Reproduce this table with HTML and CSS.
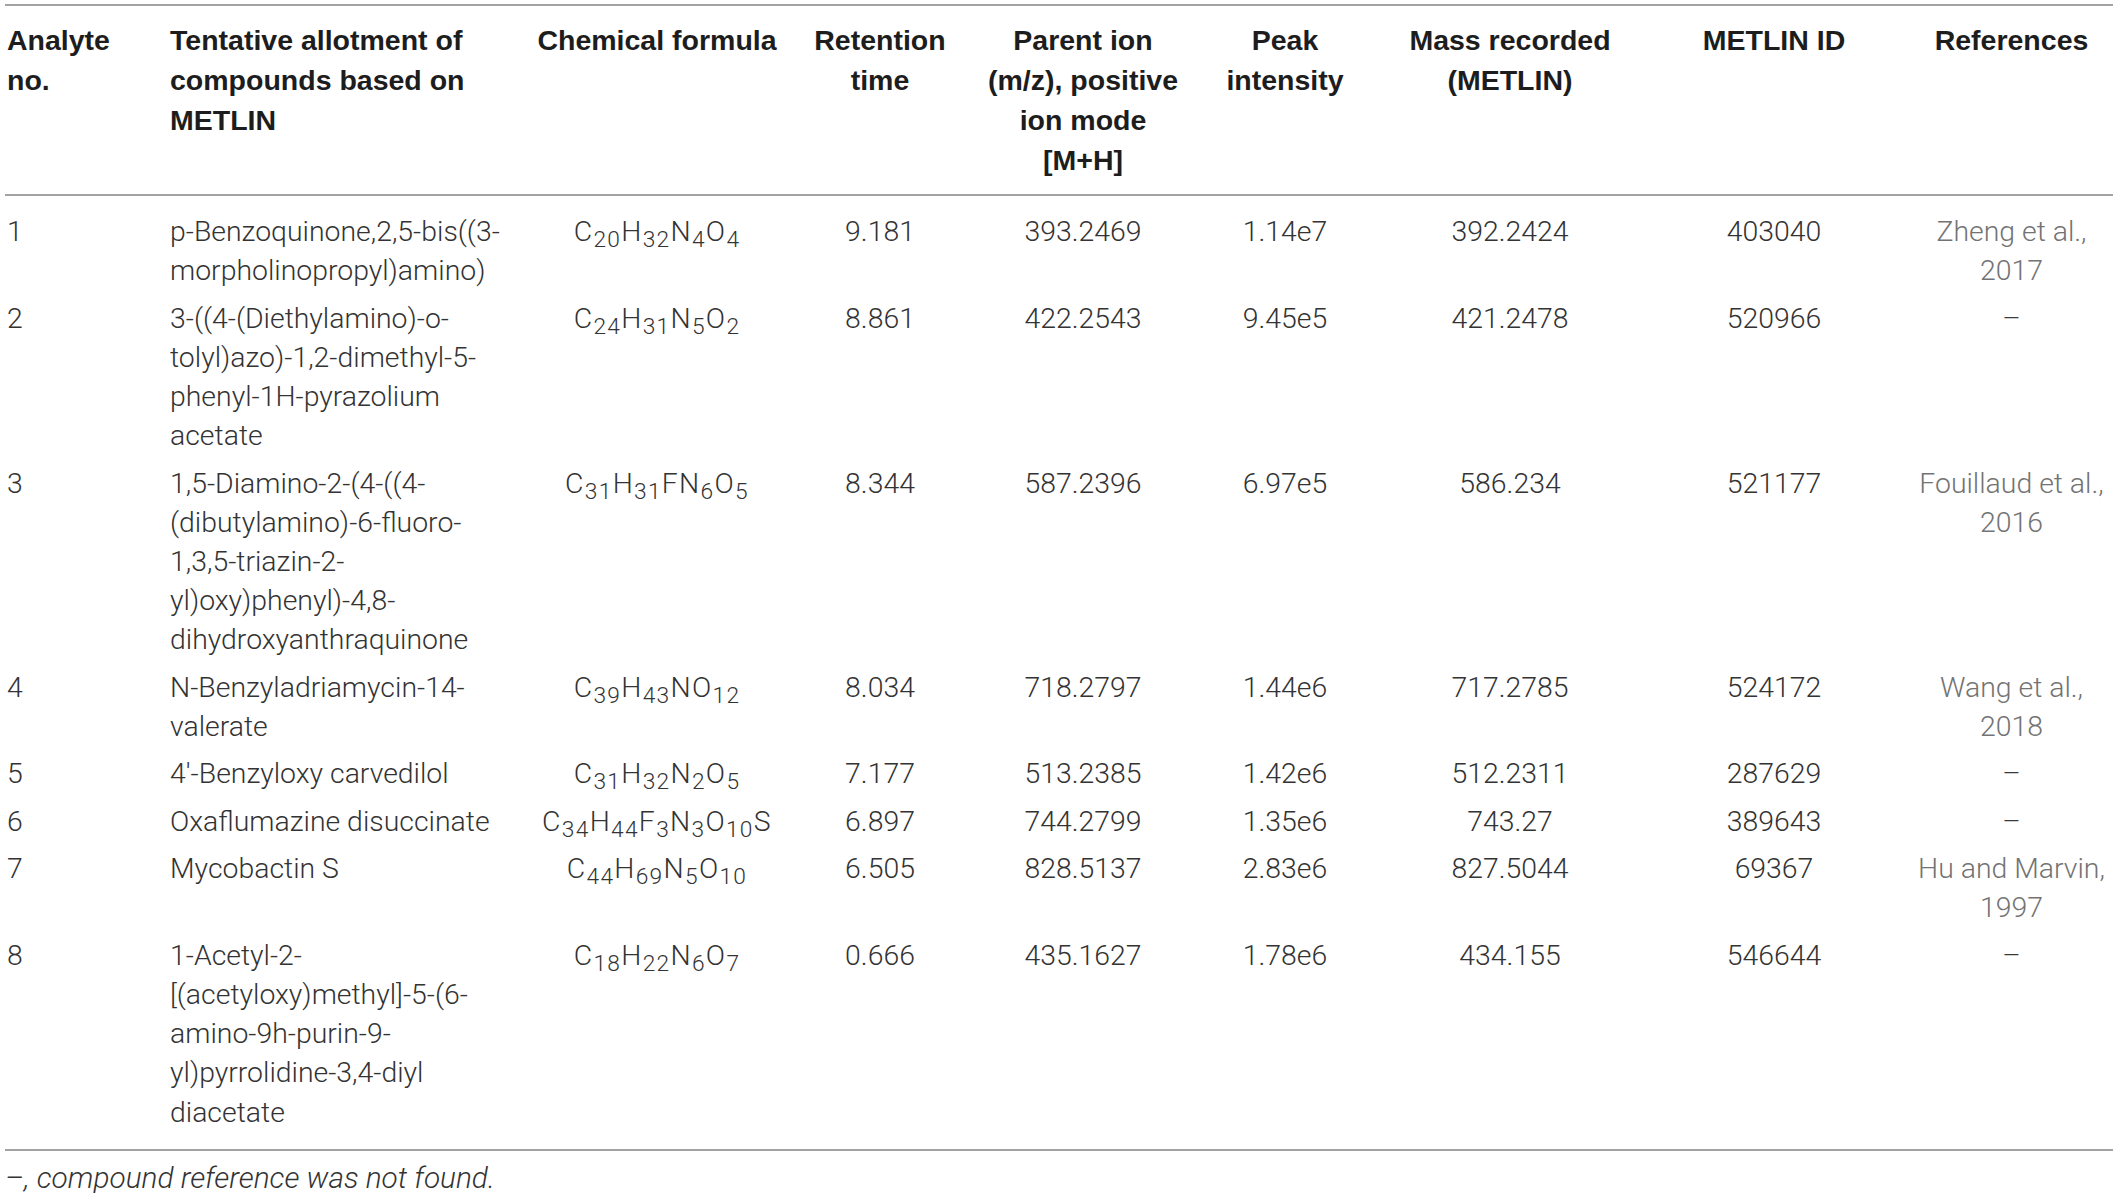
FILE: index.html
```html
<!DOCTYPE html>
<html lang="en">
<head>
<meta charset="utf-8">
<title>Tentative compounds based on METLIN</title>
<link rel="stylesheet" href="styles.css">
</head>
<body>
<div class="sheet">
<table class="data">
  <colgroup>
    <col class="c-no">
    <col class="c-name">
    <col class="c-formula">
    <col class="c-rt">
    <col class="c-ion">
    <col class="c-peak">
    <col class="c-mass">
    <col class="c-id">
    <col class="c-ref">
  </colgroup>
  <thead>
    <tr>
      <th class="left">Analyte<br>no.</th>
      <th class="left">Tentative allotment of<br>compounds based on<br>METLIN</th>
      <th>Chemical formula</th>
      <th>Retention<br>time</th>
      <th>Parent ion<br>(m/z), positive<br>ion mode<br>[M+H]</th>
      <th>Peak<br>intensity</th>
      <th>Mass recorded<br>(METLIN)</th>
      <th>METLIN ID</th>
      <th>References</th>
    </tr>
  </thead>
  <tbody>
    <tr>
      <td class="left">1</td>
      <td class="left">p-Benzoquinone,2,5-bis((3-<br>morpholinopropyl)amino)</td>
      <td class="formula">C<sub>20</sub>H<sub>32</sub>N<sub>4</sub>O<sub>4</sub></td>
      <td>9.181</td>
      <td>393.2469</td>
      <td>1.14e7</td>
      <td>392.2424</td>
      <td>403040</td>
      <td class="ref">Zheng et al.,<br>2017</td>
    </tr>
    <tr>
      <td class="left">2</td>
      <td class="left">3-((4-(Diethylamino)-o-<br>tolyl)azo)-1,2-dimethyl-5-<br>phenyl-1H-pyrazolium<br>acetate</td>
      <td class="formula">C<sub>24</sub>H<sub>31</sub>N<sub>5</sub>O<sub>2</sub></td>
      <td>8.861</td>
      <td>422.2543</td>
      <td>9.45e5</td>
      <td>421.2478</td>
      <td>520966</td>
      <td class="ref none">–</td>
    </tr>
    <tr>
      <td class="left">3</td>
      <td class="left">1,5-Diamino-2-(4-((4-<br>(dibutylamino)-6-fluoro-<br>1,3,5-triazin-2-<br>yl)oxy)phenyl)-4,8-<br>dihydroxyanthraquinone</td>
      <td class="formula">C<sub>31</sub>H<sub>31</sub>FN<sub>6</sub>O<sub>5</sub></td>
      <td>8.344</td>
      <td>587.2396</td>
      <td>6.97e5</td>
      <td>586.234</td>
      <td>521177</td>
      <td class="ref">Fouillaud et al.,<br>2016</td>
    </tr>
    <tr>
      <td class="left">4</td>
      <td class="left">N-Benzyladriamycin-14-<br>valerate</td>
      <td class="formula">C<sub>39</sub>H<sub>43</sub>NO<sub>12</sub></td>
      <td>8.034</td>
      <td>718.2797</td>
      <td>1.44e6</td>
      <td>717.2785</td>
      <td>524172</td>
      <td class="ref">Wang et al.,<br>2018</td>
    </tr>
    <tr>
      <td class="left">5</td>
      <td class="left">4′-Benzyloxy carvedilol</td>
      <td class="formula">C<sub>31</sub>H<sub>32</sub>N<sub>2</sub>O<sub>5</sub></td>
      <td>7.177</td>
      <td>513.2385</td>
      <td>1.42e6</td>
      <td>512.2311</td>
      <td>287629</td>
      <td class="ref none">–</td>
    </tr>
    <tr>
      <td class="left">6</td>
      <td class="left">Oxaflumazine disuccinate</td>
      <td class="formula">C<sub>34</sub>H<sub>44</sub>F<sub>3</sub>N<sub>3</sub>O<sub>10</sub>S</td>
      <td>6.897</td>
      <td>744.2799</td>
      <td>1.35e6</td>
      <td>743.27</td>
      <td>389643</td>
      <td class="ref none">–</td>
    </tr>
    <tr>
      <td class="left">7</td>
      <td class="left">Mycobactin S</td>
      <td class="formula">C<sub>44</sub>H<sub>69</sub>N<sub>5</sub>O<sub>10</sub></td>
      <td>6.505</td>
      <td>828.5137</td>
      <td>2.83e6</td>
      <td>827.5044</td>
      <td>69367</td>
      <td class="ref">Hu and Marvin,<br>1997</td>
    </tr>
    <tr>
      <td class="left">8</td>
      <td class="left">1-Acetyl-2-<br>[(acetyloxy)methyl]-5-(6-<br>amino-9h-purin-9-<br>yl)pyrrolidine-3,4-diyl<br>diacetate</td>
      <td class="formula">C<sub>18</sub>H<sub>22</sub>N<sub>6</sub>O<sub>7</sub></td>
      <td>0.666</td>
      <td>435.1627</td>
      <td>1.78e6</td>
      <td>434.155</td>
      <td>546644</td>
      <td class="ref none">–</td>
    </tr>
  </tbody>
</table>
<p class="note">–, compound reference was not found.</p>
</div>
</body>
</html>
```

FILE: styles.css
```css
html, body {
  margin: 0;
  padding: 0;
  background: #ffffff;
}

.sheet {
  padding: 4px 0 0 5px;
}

.data {
  border-collapse: collapse;
  table-layout: fixed;
  width: 2108px;
}

.c-no { width: 163px; }
.c-name { width: 364px; }
.c-formula { width: 250px; }
.c-rt { width: 196px; }
.c-ion { width: 210px; }
.c-peak { width: 194px; }
.c-mass { width: 256px; }
.c-id { width: 272px; }
.c-ref { width: 203px; }

.data th {
  font-family: "Liberation Sans", Arial, sans-serif;
  font-weight: bold;
  font-size: 28.5px;
  line-height: 40px;
  color: #1d1d1d;
  text-align: center;
  vertical-align: top;
  white-space: nowrap;
  padding: 14px 2px 14px 2px;
  border-top: 2px solid #a3a3a3;
  border-bottom: 2px solid #a3a3a3;
}

.data td {
  font-family: Roboto, "Liberation Sans", Arial, sans-serif;
  font-weight: 300;
  font-size: 28.4px;
  line-height: 39.2px;
  color: #333333;
  text-align: center;
  vertical-align: top;
  white-space: nowrap;
  padding: 4px 2px 4.2px 2px;
}

.data th.left,
.data td.left {
  text-align: left;
}

.data tbody tr:first-child td {
  padding-top: 16px;
}

.data tbody tr:last-child td {
  padding-bottom: 17px;
  border-bottom: 2px solid #a3a3a3;
}

.data td.formula {
  letter-spacing: 1.3px;
}

.data td.ref {
  color: #737373;
}

.data td.ref.none {
  color: #3a3a3a;
}

.data sub {
  font-size: 0.8em;
  line-height: 0;
  vertical-align: -0.26em;
}

.note {
  margin: 12px 0 0 0;
  font-family: Roboto, "Liberation Sans", Arial, sans-serif;
  font-weight: 300;
  font-style: italic;
  font-size: 29.8px;
  line-height: 30px;
  color: #333333;
}
```
